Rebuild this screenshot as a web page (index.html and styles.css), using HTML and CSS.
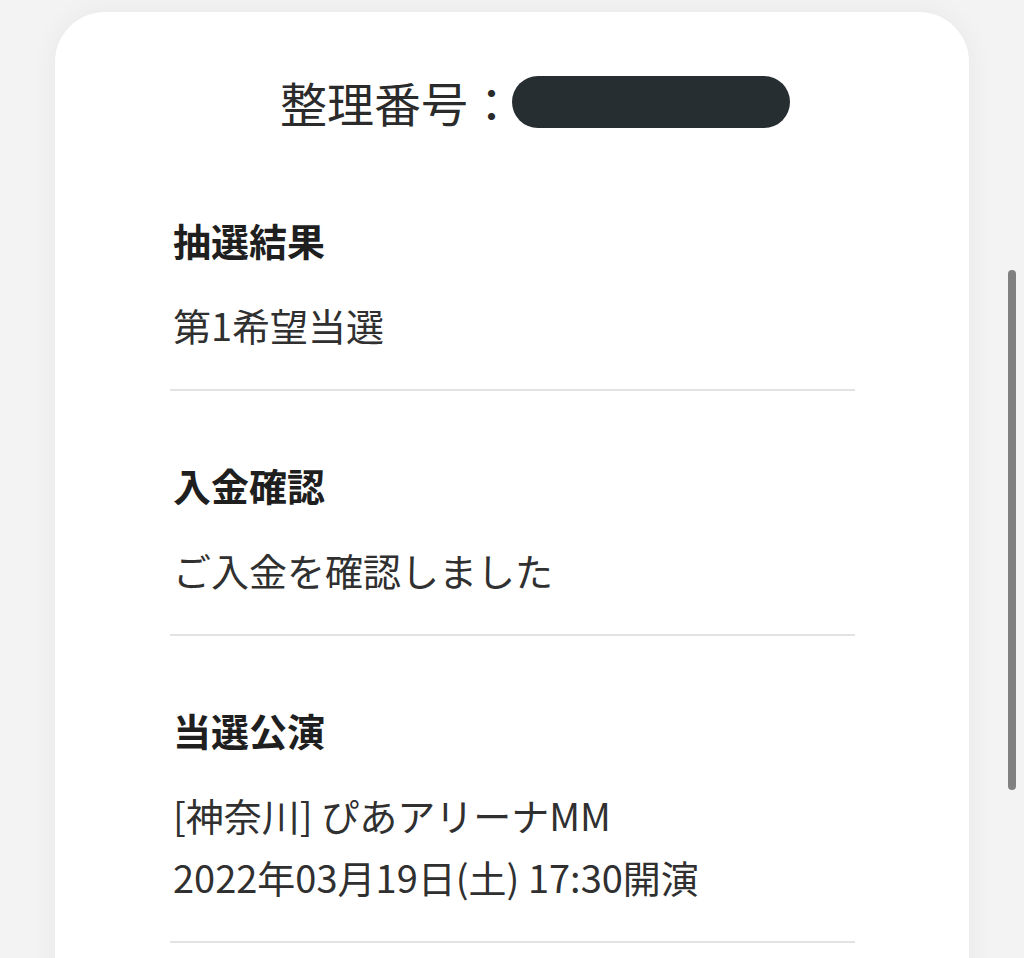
FILE: index.html
```html
<!DOCTYPE html>
<html lang="ja">
<head>
    <meta charset="utf-8">
    <title>抽選結果</title>
    <link rel="stylesheet" href="styles.css">
</head>
<body>
    <div class="page">
        <div class="card">
            <div class="ticket_no">
                <span class="ticket_label">整理番号：</span>
                <span class="masked"></span>
            </div>
            <div class="info_row">
                <p class="info_label">抽選結果</p>
                <p class="info_value">第1希望当選</p>
            </div>
            <div class="info_row">
                <p class="info_label">入金確認</p>
                <p class="info_value">ご入金を確認しました</p>
            </div>
            <div class="info_row">
                <p class="info_label">当選公演</p>
                <p class="info_value">[神奈川] ぴあアリーナMM<br>2022年03月19日(土) 17:30開演</p>
            </div>
        </div>
        <div class="scroll_thumb"></div>
    </div>
</body>
</html>
```

FILE: styles.css
```css
body{
    margin: 0;
    background-color: #f3f3f3;
    font-family: "Noto Sans CJK JP", "Noto Sans", sans-serif;
    overflow: hidden;
}
.page{
    position: relative;
    height: 958px;
    padding: 12px 55px 0 55px;
    box-sizing: border-box;
}
.card{
    background-color: #fff;
    border-radius: 50px 50px 0 0;
    box-shadow: 0 0 28px rgba(0, 0, 0, 0.05);
    min-height: 1000px;
    padding: 64px 114px 0 115px;
    box-sizing: border-box;
}
.ticket_no{
    display: flex;
    align-items: center;
    height: 52px;
    padding-left: 110px;
    margin-bottom: 18px;
}
.ticket_label{
    font-size: 47px;
    line-height: 52px;
    color: #2b2b2b;
}
.masked{
    display: inline-block;
    width: 278px;
    height: 52px;
    border-radius: 26px;
    background-color: #262e31;
    margin-left: -3px;
}
.info_row{
    padding: 63px 0 33px 3px;
    border-bottom: 2px solid #e3e3e3;
}
.info_label{
    margin: 0 0 23px 0;
    font-size: 38px;
    line-height: 62px;
    font-weight: bold;
    color: #1f1f1f;
}
.info_value{
    margin: 0;
    font-size: 38px;
    line-height: 62px;
    color: #303030;
}
.scroll_thumb{
    position: absolute;
    top: 270px;
    right: 8px;
    width: 8px;
    height: 520px;
    border-radius: 4px;
    background-color: #808080;
}
```
